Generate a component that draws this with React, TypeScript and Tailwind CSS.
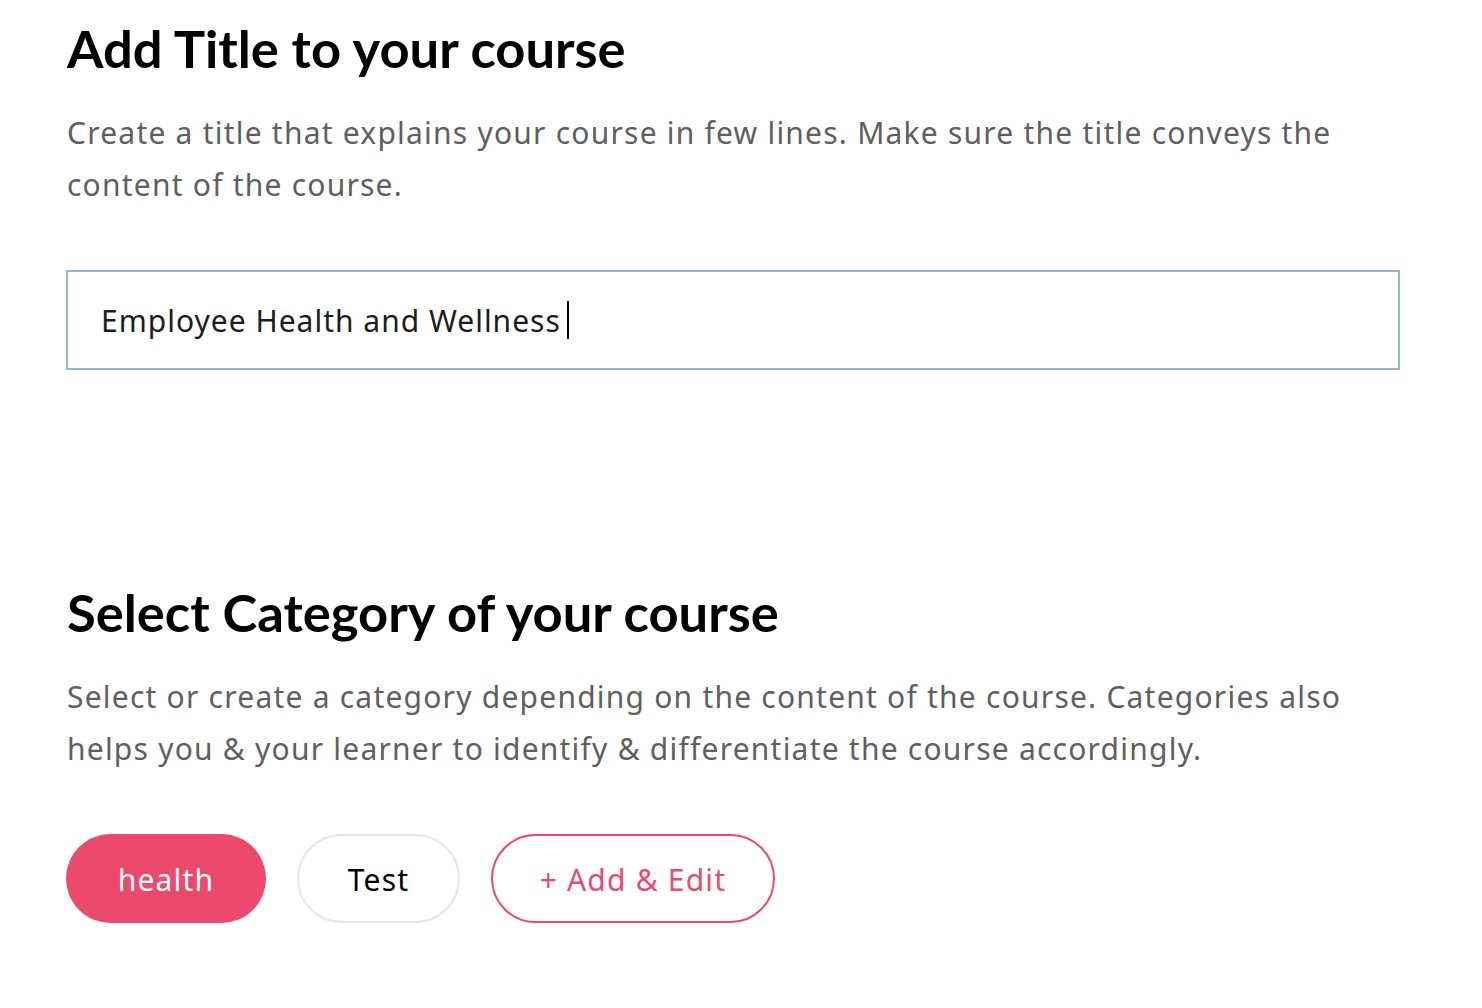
import React from "react";

export default function App() {
  return (
    <div className="min-h-screen w-full bg-white pl-[66px] pr-[82px]">
      <h1 className="pl-[1px] pt-[16px] text-[52.5px] font-bold leading-[64px] text-black [font-family:Lato,'Liberation_Sans',sans-serif]">
        Add Title to your course
      </h1>
      <p className="mt-[27px] pl-[1px] text-[30px] leading-[52px] tracking-[1.22px] text-[#5f5f5f] [font-family:'Noto_Sans',sans-serif]">
        Create a title that explains your course in few lines. Make sure the title conveys the content of the course.
      </p>
      <div className="mt-[59px] flex h-[100px] w-[1334px] items-center border-2 border-[#93b6d6] pl-[33px]">
        <span className="text-[30px] tracking-[1px] text-[#1c1c1c] [font-family:'Noto_Sans',sans-serif]">Employee Health and Wellness</span>
        <span className="ml-[6px] h-[38px] w-[2px] bg-black" />
      </div>
      <h2 className="mt-[210px] pl-[1px] text-[52.5px] font-bold leading-[64px] text-black [font-family:Lato,'Liberation_Sans',sans-serif]">
        Select Category of your course
      </h2>
      <p className="mt-[27px] pl-[1px] text-[30px] leading-[52px] tracking-[1.22px] text-[#5f5f5f] [font-family:'Noto_Sans',sans-serif]">
        Select or create a category depending on the content of the course. Categories also helps you &amp; your learner to identify &amp; differentiate the course accordingly.
      </p>
      <div className="mt-[59px] flex items-center gap-[31px] [font-family:'Noto_Sans',sans-serif]">
        <button className="flex h-[89px] w-[200px] items-center justify-center rounded-full bg-[#ec4a6c] pt-[2px] text-[30px] tracking-[1.2px] text-white">
          health
        </button>
        <button className="flex h-[89px] w-[163px] items-center justify-center rounded-full border-2 border-[#e6e6e6] bg-white pt-[2px] text-[30px] tracking-[1.2px] text-black">
          Test
        </button>
        <button className="flex h-[89px] w-[284px] items-center justify-center rounded-full border-2 border-[#ec4a6c] bg-white pt-[2px] text-[30px] tracking-[1.2px] text-[#ec4a6c]">
          + Add &amp; Edit
        </button>
      </div>
    </div>
  );
}
